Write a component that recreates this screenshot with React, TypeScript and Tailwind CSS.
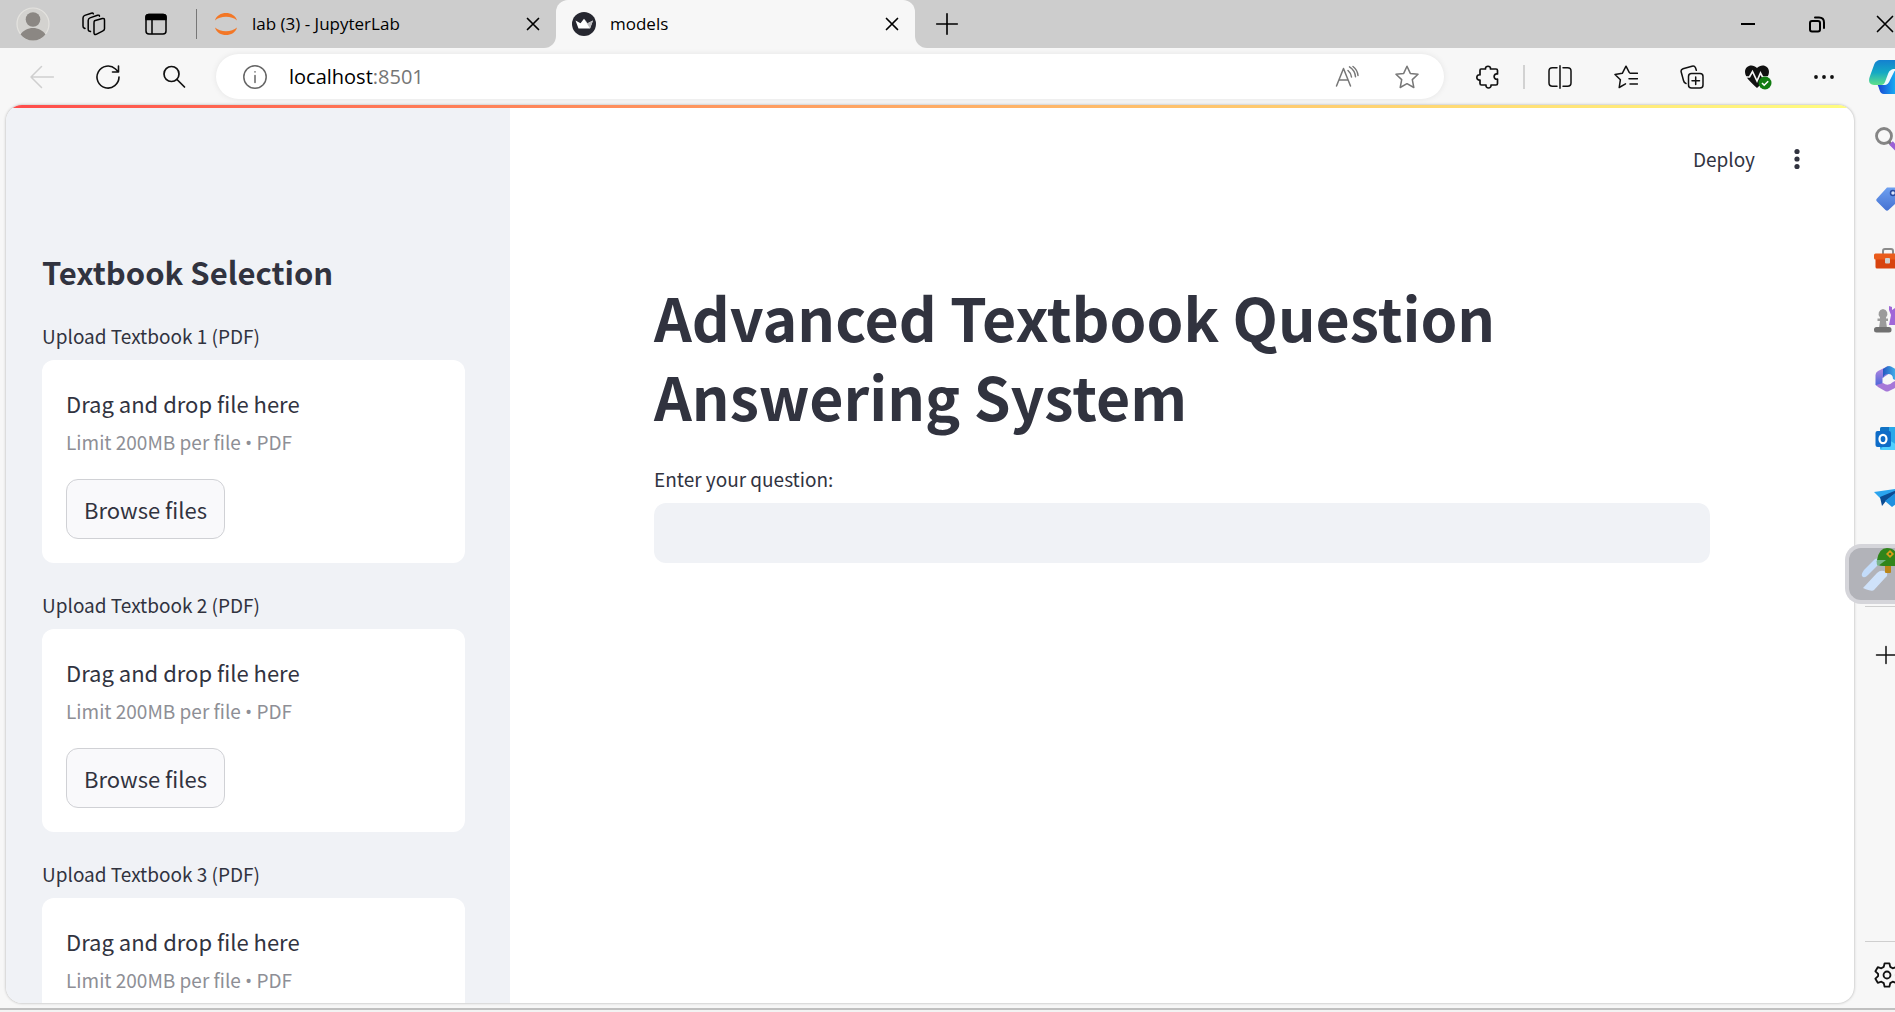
import type { ReactNode } from "react";

const sans = "font-['Noto_Sans_CJK_SC','Noto_Sans',sans-serif]";
const ui = "font-['Open_Sans','Noto_Sans',sans-serif]";

type IconProps = { children: ReactNode; size?: string; className?: string; width?: number };

function Icon({ children, size = "size-6", className = "", width = 1.5 }: IconProps) {
  return (
    <svg
      viewBox="0 0 24 24"
      className={`${size} shrink-0 ${className}`}
      fill="none"
      stroke="currentColor"
      strokeWidth={width}
      strokeLinecap="round"
      strokeLinejoin="round"
      aria-hidden="true"
    >
      {children}
    </svg>
  );
}

function Cell({ label, children, width = "w-[66px]" }: { label: string; children: ReactNode; width?: string }) {
  return (
    <button type="button" aria-label={label} className={`flex h-full ${width} shrink-0 items-center justify-center`}>
      {children}
    </button>
  );
}

function CloseIcon({ size = "size-6" }: { size?: string }) {
  return (
    <Icon size={size} width={1.7}>
      <path d="M6.500 6.500l11 11M17.500 6.500l-11 11" />
    </Icon>
  );
}

function TabBar() {
  return (
    <header className={`flex h-12 shrink-0 items-center bg-[#cdcdcd] pl-0.5 text-black ${ui}`}>
      <Cell label="Profile" width="w-[61px]">
        <svg viewBox="0 0 34 34" className="size-[34px]" aria-hidden="true">
          <circle cx="17" cy="17" r="16" fill="#d3d2cf" stroke="#e4e3df" strokeWidth="1.2" />
          <circle cx="17" cy="12.5" r="7.3" fill="#8b8783" />
          <path d="M4.500 27.500C7 23.500 12 21 17 21s10 2.500 12.500 6.500A16 16 0 0 1 4.500 27.500z" fill="#8b8783" />
        </svg>
      </Cell>
      <Cell label="Workspaces" width="w-[61px]">
        <Icon>
          <path d="M12.500 8.800l7.800-2.300q2.200-.5 2.200 1.700v8.600q0 1.500-1.500 2l-6.800 3.500q-2.200.8-2.200-1.500v-9.500q0-2 .5-2.500z" />
          <path d="M8.500 19.500l-1.500-.5q-.8-.5-.8-1.800V8.500q0-2 1.800-2.600l7.500-2.600q1.800-.6 2 .9" />
          <path d="M3 16.500l-1-.5q-1-.5-1-2V6q0-2 1.800-2.600l6.500-2.200q1.700-.4 2 .6" />
        </Icon>
      </Cell>
      <Cell label="Tab actions" width="w-[63px]">
        <Icon>
          <rect x="2" y="2.500" width="20" height="19.500" rx="3" />
          <path d="M2 7.500V5q0-2.500 3-2.500h14q3 0 3 2.500v2.500z" fill="currentColor" />
          <path d="M8 8v13.500" />
        </Icon>
      </Cell>
      <span className="ml-[9px] h-[30px] w-px bg-[#777]" />
      <nav aria-label="Tabs" className="ml-2 flex h-full bg-[#f7f7f7]">
        <div className="flex w-[351px] items-center rounded-br-xl bg-[#cdcdcd] pr-[11px] pl-[9px]">
          <svg viewBox="0 0 24 24" className="size-6" fill="#f37726" aria-hidden="true">
            <path d="M1 8.500C3.500-1.500 20.500-1.500 23 8.500 18 3.600 6 3.600 1 8.500z" />
            <path d="M1 15.500C3.500 25.500 20.500 25.500 23 15.500 18 20.400 6 20.400 1 15.500z" />
          </svg>
          <a href="#lab" className="ml-3.5 flex-1 text-[17px] leading-6">lab (3) - JupyterLab</a>
          <button type="button" aria-label="Close lab (3) - JupyterLab"><CloseIcon /></button>
        </div>
        <div className="flex bg-[#cdcdcd]">
          <div className="flex w-[359px] items-center rounded-t-xl bg-[#f7f7f7] pr-[11px] pl-4">
            <svg viewBox="0 0 24 24" className="size-6" aria-hidden="true">
              <circle cx="12" cy="12" r="12" fill="#262730" />
              <path d="M3.500 8.500l5 2.800L12 6.800l3.500 4.500 5.500-2.800-3 8H6.500z" fill="#fff" />
              <path d="M12 6.800l3.500 4.500 5.500-2.800-3 8z" fill="#bcbcbf" />
            </svg>
            <a href="#models" aria-current="page" className="ml-3.5 flex-1 text-[17px] leading-6">models</a>
            <button type="button" aria-label="Close models"><CloseIcon /></button>
          </div>
        </div>
        <span className="w-3 rounded-bl-xl bg-[#cdcdcd]" />
      </nav>
      <button type="button" aria-label="New tab" className="ml-[7px]">
        <Icon size="size-[26px]" width={1.5}><path d="M12 2.500v19M2.500 12h19" /></Icon>
      </button>
      <div className="ml-auto flex h-full">
        <Cell label="Minimize" width="w-[69px]"><Icon width={2}><path d="M5 12h14" strokeLinecap="butt" /></Icon></Cell>
        <Cell label="Restore" width="w-[69px]">
          <Icon width={2}>
            <rect x="5" y="9" width="10" height="10.500" rx="2" />
            <path d="M10 5.500h4q5 0 5 5V16" />
          </Icon>
        </Cell>
        <button type="button" aria-label="Close window" className="flex w-11 items-center justify-end overflow-hidden">
          <Icon size="size-5" width={2}><path d="M3 3l18 18M21 3L3 21" /></Icon>
        </button>
      </div>
    </header>
  );
}

function Toolbar() {
  return (
    <div className={`flex h-[57px] shrink-0 items-center bg-[#f7f7f7] pl-[9px] text-[#111] ${ui}`}>
      <div className="flex h-full text-[#cfcfcf]">
        <Cell label="Back"><Icon><path d="M23.500 12H1M11.500 1.500L1 12l10.500 10.500" /></Icon></Cell>
      </div>
      <Cell label="Refresh">
        <Icon width={1.6}><path d="M23 12a11 11 0 1 1-3.500-8L22 6.500M22.500 1v6H16.500" /></Icon>
      </Cell>
      <Cell label="Search"><Icon width={1.7}><circle cx="9.500" cy="9" r="7.500" /><path d="M15 14.500l7.500 7.500" /></Icon></Cell>
      <div className="ml-[9px] flex h-[45px] min-w-0 flex-1 items-center rounded-full bg-white pr-[25px] pl-[27px] shadow-[0_0_6px_rgba(0,0,0,0.08)]">
        <Icon className="text-[#666]"><circle cx="12" cy="12" r="11.200" /><path d="M12 10.500v7M12 6.800v.2" /></Icon>
        <button type="button" aria-label="Address: localhost:8501" className="ml-[22px] flex-1 cursor-text text-left text-[20px] leading-7 text-black">
          localhost<span className="text-[#767676]">:8501</span>
        </button>
        <div className="flex gap-9 text-[#777]">
          <button type="button" aria-label="Read aloud">
            <Icon><path d="M1.500 21L8.500 3.500 15.500 21M4 15h9M13 5.500q3 2.500 3.500 6.500M14.500 1.800q5.500 3.500 6 10M18 1.500q4.500 3.500 5 9" /></Icon>
          </button>
          <button type="button" aria-label="Add to favorites">
            <Icon><path d="M12 1.200l3.300 7.200 7.700.9-5.700 5.300 1.500 7.900L12 18.700l-6.800 3.800 1.500-7.900L1 9.300l7.700-.9z" /></Icon>
          </button>
        </div>
      </div>
      <div className="ml-[11px] flex h-full shrink-0 items-center">
        <Cell label="Extensions">
          <Icon width={1.7}>
            <path d="M5 4h4.500C9 .300 15 .300 14.500 4H20q1.500 0 1.500 1.500V9c-4.500-1-4.500 6 0 5.200v4.300q0 1.500-1.500 1.500h-5c.6 4-5.600 4-5 0H5.500Q4 20 4 18.500V15C-.2 15.500-.2 9.300 4 9.800V5.500Q4 4 5 4z" />
          </Icon>
        </Cell>
        <span className="mx-0.5 h-6 w-0.5 bg-[#d2d2d2]" />
        <Cell label="Split screen">
          <Icon><path d="M9 2.800H4.500Q1 2.800 1 6v12q0 3.200 3.500 3.200H9M15 2.800h4.500Q23 2.800 23 6v12q0 3.200-3.500 3.200H15M12 .8v22.400" /></Icon>
        </Cell>
        <Cell label="Favorites">
          <Icon><path d="M11.500 18.800l-6.300 3.700 1.200-7.800L1 9.500l7.300-1.200L12 1.200l3.200 6.100M16 8.300h7.500M15 13.700h8.500M16 19h7.500" /></Icon>
        </Cell>
        <Cell label="Collections">
          <Icon>
            <rect x="8.500" y="8.500" width="14.500" height="14.500" rx="3" />
            <path d="M15.700 12v7.500M12 15.700h7.500M6 18.500Q4 18 3.500 15.500L1.200 7Q.5 4.500 3 3.700l9-2.500q2.500-.7 3.500 1.600l.8 2.500" />
          </Icon>
        </Cell>
        <Cell label="Browser essentials">
          <svg viewBox="0 0 28 26" className="h-[26px] w-7" fill="none" aria-hidden="true">
            <path d="M13 4C9-.5 1 1 1 8c0 6 8 12 12 16 4-4 12-10 12-16 0-7-8-8.500-12-4z" fill="#111" />
            <path d="M0 13h5.500l3-5.500 4.500 9.500 3.500-8 2 4H27" stroke="#f7f7f7" strokeWidth="1.700" />
            <circle cx="21" cy="19" r="6.500" fill="#107c10" />
            <path d="M18 19l2.200 2.200 4-4" stroke="#fff" strokeWidth="1.600" />
          </svg>
        </Cell>
        <Cell label="Settings and more">
          <Icon><g fill="currentColor" stroke="none"><circle cx="4" cy="12" r="1.900" /><circle cx="12" cy="12" r="1.900" /><circle cx="20" cy="12" r="1.900" /></g></Icon>
        </Cell>
        <button type="button" aria-label="Copilot" className="flex w-[38px] overflow-hidden pl-3">
          <svg viewBox="0 0 40 36" className="h-9 w-10 shrink-0" aria-hidden="true">
            <defs>
              <linearGradient id="cp1" x1="0" y1="0" x2="0" y2="1"><stop stopColor="#1480d0" /><stop offset=".5" stopColor="#14a9c4" /><stop offset="1" stopColor="#5fe08a" /></linearGradient>
              <linearGradient id="cp2" x1="0" y1="0" x2="1" y2="0"><stop stopColor="#1a3fd0" /><stop offset=".6" stopColor="#17b2f5" /></linearGradient>
            </defs>
            <path d="M8 25h10l5-13h17v23H15c-5 0-4-6-7-10z" fill="url(#cp2)" />
            <path d="M12 1h14v9l-5 10c-1 4-3 6-7 6H5c-5 0-6-4-4-9L5 6c1-3 3-5 7-5z" fill="url(#cp1)" />
            <path d="M26 10c-4 0-6 2-7 5l-3 8c-.8 2-2 3-4 3h3c3 0 5-2 6-5l5-10z" fill="#eefaff" />
          </svg>
        </button>
      </div>
    </div>
  );
}

function Uploader({ n }: { n: number }) {
  return (
    <section className="mb-[30px] text-[#31333f]">
      <h3 id={`upload-${n}`} className="mb-3 text-[19px] leading-6">Upload Textbook {n} (PDF)</h3>
      <div className="rounded-xl bg-white p-6">
        <p className="text-[22px] leading-[38px]">Drag and drop file here</p>
        <p className="text-[19px] leading-10 text-[#8e8f96]">
          Limit 200MB per file <span className="font-['Open_Sans']">•</span> PDF
        </p>
        <button
          type="button"
          aria-describedby={`upload-${n}`}
          className="mt-4 h-[60px] rounded-xl border border-[#d0d1d5] bg-[#f9f9fb] px-[17px] text-[22px] leading-[38px]"
        >
          Browse files
        </button>
      </div>
    </section>
  );
}

function Page() {
  return (
    <div className={`relative flex min-w-0 flex-1 overflow-hidden rounded-2xl bg-white text-[#31333f] shadow-[0_0_3px_rgba(0,0,0,0.3)] ${sans}`}>
      <div className="absolute inset-x-0 top-0 h-[3px] bg-linear-to-r from-[#ff4b4b] to-[#fffd80]" />
      <aside className="w-[504px] shrink-0 overflow-y-auto bg-[#f0f2f6] pt-[142px] pr-[45px] pl-9 [scrollbar-width:none]">
        <h2 className="mb-[27px] text-[31px] leading-[50px] font-bold">Textbook Selection</h2>
        <Uploader n={1} />
        <Uploader n={2} />
        <Uploader n={3} />
      </aside>
      <main className="flex min-w-0 flex-1 flex-col">
        <div className="flex items-center justify-end gap-8 pt-9 pr-[47px]">
          <button type="button" className="text-[19px] leading-9">Deploy</button>
          <button type="button" aria-label="Main menu">
            <svg viewBox="0 0 20 24" className="h-6 w-5" fill="currentColor" aria-hidden="true">
              <circle cx="10" cy="4.500" r="2.600" /><circle cx="10" cy="12" r="2.600" /><circle cx="10" cy="19.500" r="2.600" />
            </svg>
          </button>
        </div>
        <div className="px-36 pt-[100px]">
          <h1 className="max-w-[900px] text-[59px] leading-[79px] font-bold">Advanced Textbook Question Answering System</h1>
          <label htmlFor="question" className="mt-8 mb-3 block text-[19px] leading-6">Enter your question:</label>
          <input id="question" type="text" className="h-[60px] w-full rounded-xl bg-[#f0f2f6] px-4 text-[22px]" />
        </div>
      </main>
    </div>
  );
}

function RailIcon({ label, children }: { label: string; children: ReactNode }) {
  return (
    <button type="button" aria-label={label} className="flex h-[60px] w-full shrink-0 items-center overflow-hidden pl-5">
      <svg viewBox="0 0 28 28" className="size-7 shrink-0" fill="none" aria-hidden="true">{children}</svg>
    </button>
  );
}

function Rail() {
  return (
    <aside className="flex w-[41px] shrink-0 flex-col pt-1 text-[#111]">
      <RailIcon label="Search">
        <circle cx="10" cy="11" r="7.500" stroke="#858585" strokeWidth="2.800" />
        <path d="M14.500 16.500l3 3" stroke="#777" strokeWidth="3" />
        <path d="M17 18l8 8" stroke="#9a62d6" strokeWidth="5" />
      </RailIcon>
      <RailIcon label="Shopping">
        <defs><linearGradient id="tag" x1="0" y1="0" x2="0" y2="1"><stop stopColor="#6ea0f0" /><stop offset="1" stopColor="#4471d2" /></linearGradient></defs>
        <path d="M13 2.500h10q3 0 3 3v9L14.500 25q-1.500 1.500-3 0L3 16.500q-1.500-1.500 0-3z" fill="url(#tag)" />
        <circle cx="19" cy="8" r="2.500" fill="#d8e6ff" stroke="#2849a0" strokeWidth="1.500" />
      </RailIcon>
      <RailIcon label="Tools">
        <path d="M9 9V6q0-2 2-2h6q2 0 2 2v3" stroke="#8b8b8b" strokeWidth="2" />
        <rect x="1.500" y="12" width="26" height="11.500" rx="1.500" fill="#d8430f" />
        <rect x="0" y="8.500" width="28" height="6" rx="1.500" fill="#ea5c1c" />
        <rect x="11" y="13" width="5" height="5.500" rx="1" fill="#d0d0d0" />
      </RailIcon>
      <RailIcon label="Games">
        <path d="M15 1l3 1v3l3-2v-2h4v19H15l2-10-2-5z" fill="#a067d8" />
        <path d="M9 4a5 5 0 0 1 3 8.500v1h2v2.500h-2l1 7H5l1-7H3.500v-2.500H6v-1A5 5 0 0 1 9 4z" fill="#9b9b9b" />
        <rect x="0" y="22" width="17.500" height="5.500" rx="2.500" fill="#717171" />
      </RailIcon>
      <RailIcon label="Microsoft 365">
        <defs>
          <linearGradient id="m1" x1="0" y1="0" x2="0" y2="1"><stop stopColor="#c38be2" /><stop offset="1" stopColor="#3b63d8" /></linearGradient>
          <linearGradient id="m2" x1="0" y1="0" x2="1" y2="0"><stop stopColor="#2458c0" /><stop offset="1" stopColor="#49c8f5" /></linearGradient>
        </defs>
        <path d="M14 1L4 6Q1.500 7.500 1.500 10v10l7 3V13l6-4z" fill="url(#m1)" />
        <path d="M9 4l4-2.500q2-1 4 0L25 6v11l-6-3q0-5-5-5-4 0-5 4z" fill="url(#m2)" />
        <path d="M2 20l7-2q5 4 10-1l6-3v5q0 2-2 3l-8 4q-2 1-4 0L4 22z" fill="#a678d8" />
      </RailIcon>
      <RailIcon label="Outlook">
        <rect x="6" y="2" width="22" height="23" rx="2" fill="#28a8ea" />
        <path d="M6 4q0-2 2-2h7v10H6z" fill="#1272c4" />
        <path d="M15 15l13 8v2H6z" fill="#50d0ff" />
        <rect x="1.500" y="6" width="15.500" height="16" rx="2" fill="#0f6cc8" />
        <ellipse cx="9" cy="14" rx="3.500" ry="4.200" stroke="#fff" strokeWidth="2.200" />
      </RailIcon>
      <RailIcon label="Drop">
        <path d="M0 7L28 3 7 14z" fill="#2ba4ee" />
        <path d="M28 3L6 12l2 9 4-5z" fill="#0c4c93" />
        <path d="M28 3L11 16l7 6 4-3z" fill="#1e91e0" />
      </RailIcon>
      <div className="relative mt-[15px] h-[62px]">
        <button type="button" aria-label="Glider" className="absolute top-0 right-0 h-[60px] w-[50px] overflow-hidden rounded-l-2xl border-y-4 border-l-4 border-[#d5d5da] bg-[#b2b3b9]">
          <svg viewBox="0 0 46 52" className="h-[52px] w-[46px]" aria-hidden="true">
            <path d="M15 22l11-11q3-1 10-1L19 27q-4 4-6 1-1-2 2-6z" fill="#c3dcfa" />
            <path d="M14 40l14-15q4-4 9-1 3 3-1 6L25 42q-2 2-11-2z" fill="#cfe2fa" />
            <rect x="36" y="16" width="6" height="9" rx="1" fill="#bb8618" />
            <path d="M28 12Q30 0 38 0q12 0 12 18H34q-7 0-6-6z" fill="#31851b" />
            <path d="M28 12h9l-8 6q-2-2-1-6z" fill="#79b58c" />
            <path d="M41 2l4 4-4 4-4-4z" fill="#dc9c18" />
            <circle cx="41" cy="6" r="1.300" fill="#31851b" />
          </svg>
        </button>
      </div>
      <span className="ml-[11px] h-px shrink-0 bg-[#cfcfcf]" />
      <button type="button" aria-label="Customize" className="mt-[37px] flex w-full shrink-0 overflow-hidden pl-5">
        <Icon><path d="M12 2.500v17M2.500 11h20" /></Icon>
      </button>
      <span className="mt-auto ml-[11px] h-px shrink-0 bg-[#cfcfcf]" />
      <button type="button" aria-label="Settings" className="mt-5 mb-5 flex w-full shrink-0 overflow-hidden pl-5">
        <Icon size="size-[26px]" width={1.7}>
          <circle cx="12" cy="12" r="3.200" />
          <path d="M9.800 1.200h4.400l.8 3.300 2.200 1.300 3.300-1 2.200 3.800-2.500 2.400v2l2.500 2.400-2.200 3.800-3.300-1L15 19.500l-.8 3.300H9.800L9 19.500l-2.200-1.300-3.300 1-2.200-3.800L3.800 13v-2L1.300 8.600l2.200-3.800 3.300 1L9 4.500z" />
        </Icon>
      </button>
    </aside>
  );
}

export default function App() {
  return (
    <div className="flex h-screen flex-col overflow-hidden border-b-2 border-[#f3f3f3] bg-[#f7f7f7]">
      <TabBar />
      <Toolbar />
      <div className="flex min-h-0 flex-1 border-b-2 border-[#c0c0c0] pl-1.5">
        <div className="flex min-w-0 flex-1 pb-[5px]">
          <Page />
        </div>
        <Rail />
      </div>
    </div>
  );
}
